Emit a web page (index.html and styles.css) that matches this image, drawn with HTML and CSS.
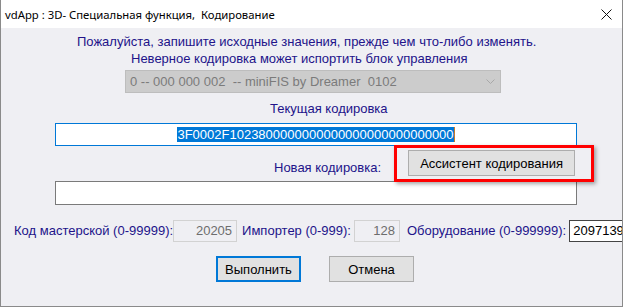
FILE: index.html
```html
<!doctype html>
<html lang="ru">
<head>
    <meta charset="UTF-8">
    <title>vdApp : 3D- Специальная функция, Кодирование</title>
    <link rel="stylesheet" href="styles.css">
</head>
<body>
<div class="window">
    <div class="titlebar">
        <span class="title">vdApp : 3D- Специальная функция,  Кодирование</span>
        <svg class="close" width="11" height="11" viewBox="0 0 11 11">
            <path d="M0.5 0.5 L10.5 10.5 M10.5 0.5 L0.5 10.5" stroke="#111" stroke-width="1" fill="none"/>
        </svg>
    </div>
    <div class="client">
        <p class="note note-1">Пожалуйста, запишите исходные значения, прежде чем что-либо изменять.</p>
        <p class="note note-2">Неверное кодировка может испортить блок управления</p>
        <div class="combo">
            <span>0 -- 000 000 002  -- miniFIS by Dreamer  0102</span>
            <svg width="9" height="5" viewBox="0 0 9 5">
                <path d="M0.5 0.5 L4.5 4.5 L8.5 0.5" stroke="#a8a8a8" stroke-width="1" fill="none"/>
            </svg>
        </div>
        <p class="caption caption-current">Текущая кодировка</p>
        <div class="field field-current">
            <span class="sel">3F0002F1023800000000000000000000000000</span><span class="caret"></span>
        </div>
        <div class="assist-row">
            <span class="caption">Новая кодировка:</span>
            <span class="highlight"><button class="btn btn-assist">Ассистент кодирования</button></span>
        </div>
        <div class="field field-new"></div>
        <div class="params">
            <span class="caption">Код мастерской (0-99999):</span>
            <span class="num num-shop">20205</span>
            <span class="caption lbl-importer">Импортер (0-999):</span>
            <span class="num num-importer">128</span>
            <span class="caption lbl-equip">Оборудование (0-999999):</span>
            <span class="num num-open">2097139</span>
        </div>
        <div class="actions">
            <button class="btn btn-default">Выполнить</button>
            <button class="btn">Отмена</button>
        </div>
    </div>
</div>
</body>
</html>
```

FILE: styles.css
```css
*{
    padding: 0;
    margin: 0;
    box-sizing: border-box;
}
body{
    width: 623px;
    height: 307px;
    overflow: hidden;
    background: #efeff3;
    font-family: "Liberation Sans", Arial, sans-serif;
    font-size: 13px;
}
.window{
    height: 307px;
    display: flex;
    flex-direction: column;
    border: 1px solid #8a8a8a;
    border-top: none;
    overflow: hidden;
}
.titlebar{
    height: 28px;
    flex: none;
    background: #ffffff;
    display: flex;
    align-items: center;
    justify-content: space-between;
    padding: 0 10px 0 4px;
}
.title{
    font-family: "Noto Sans", sans-serif;
    font-size: 11.3px;
    color: #000;
    white-space: pre;
}
.client{
    flex: 1;
    display: flex;
    flex-direction: column;
    align-items: flex-start;
    color: #22138a;
}
.note, .caption{
    line-height: 16px;
    white-space: pre;
}
.note-1{
    margin: 6px 0 0 76px;
}
.note-2{
    margin: 1px 0 0 130px;
}
.combo{
    margin: 3px 0 0 124px;
    width: 376px;
    height: 23px;
    background: #cccccc;
    border: 1px solid #bdbdbd;
    color: #7b7b7b;
    display: flex;
    align-items: center;
    justify-content: space-between;
    padding: 0 5px 0 4px;
    white-space: pre;
}
.caption-current{
    margin: 8px 0 0 269px;
}
.field{
    margin-left: 54px;
    width: 522px;
    background: #ffffff;
}
.field-current{
    margin-top: 6px;
    height: 23px;
    border: 1px solid #0078d7;
    display: flex;
    align-items: center;
    justify-content: center;
}
.sel{
    background: #0078d7;
    color: #ffffff;
    line-height: 15px;
}
.caret{
    width: 1px;
    height: 15px;
    background: #c87a28;
}
.assist-row{
    display: flex;
    align-items: flex-end;
    margin: 4px 0 0 273px;
}
.btn{
    height: 26px;
    width: 85px;
    background: #e1e1e1;
    border: 1px solid #adadad;
    font-family: inherit;
    font-size: 13px;
    color: #000;
}
.btn-assist{
    width: 167px;
}
.highlight{
    position: relative;
    margin-left: 27px;
    display: flex;
}
.highlight::after{
    content: "";
    position: absolute;
    left: -14px;
    top: -5px;
    right: -19px;
    bottom: -6px;
    border: 3px solid #ff0000;
    box-shadow: 2px 2px 4px rgba(0, 0, 0, 0.35);
}
.field-new{
    margin-top: 5px;
    height: 24px;
    border: 1px solid #7a7a7a;
}
.params{
    display: flex;
    align-items: center;
    margin: 15px 0 0 13px;
}
.num{
    height: 22px;
    line-height: 20px;
    border: 1px solid #d2d2d2;
    color: #6d6d6d;
    text-align: right;
    padding-right: 4px;
    flex: none;
}
.num-shop{
    width: 64px;
}
.lbl-importer{
    margin-left: 5px;
}
.num-importer{
    width: 46px;
    margin-left: 3px;
}
.lbl-equip{
    margin-left: 7px;
}
.num-open{
    width: 57px;
    margin-left: 3px;
    background: #ffffff;
    border-color: #444444;
    color: #000;
    text-align: left;
    padding: 0 0 0 3px;
    overflow: hidden;
    white-space: nowrap;
}
.actions{
    display: flex;
    gap: 28px;
    margin: 14px 0 0 215px;
}
.btn-default{
    border: 2px solid #0078d7;
}
```
